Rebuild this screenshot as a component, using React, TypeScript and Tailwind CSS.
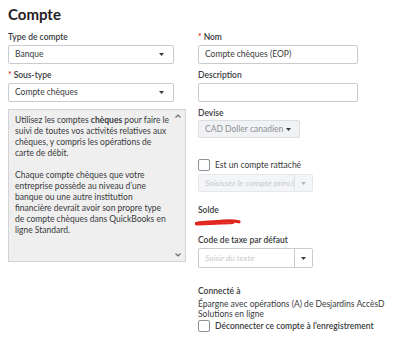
import type { ReactNode } from 'react'

function Label({ children, required, className = '' }: { children: ReactNode; required?: boolean; className?: string }) {
  return (
    <div className={`text-[8.5px] leading-[14px] font-semibold text-[#393a3d] ${className}`}>
      {required ? <span className="mr-[2px] text-[#d52b1e]">*</span> : null}
      {children}
    </div>
  )
}

function Caret({ color = '#393a3d' }: { color?: string }) {
  return (
    <svg width="5" height="3" viewBox="0 0 5 3" className="shrink-0">
      <path d="M0 0h5L2.5 3z" fill={color} />
    </svg>
  )
}

function Select({ value, className = '' }: { value: string; className?: string }) {
  return (
    <div
      className={`flex h-[19px] items-center justify-between rounded-[2px] border border-[#c9cbcf] bg-white pl-[6px] pr-[9px] text-[8.5px] text-[#393a3d] ${className}`}
    >
      <span>{value}</span>
      <Caret />
    </div>
  )
}

function Combo({ placeholder, disabled, className = '' }: { placeholder: string; disabled?: boolean; className?: string }) {
  return (
    <div
      className={`flex w-[115px] rounded-[2px] border ${disabled ? 'border-[#e6e7ea] bg-[#f4f5f8]' : 'border-[#c9cbcf] bg-white'} ${className}`}
    >
      <div className="flex min-w-0 flex-1 items-center overflow-hidden whitespace-nowrap pl-[6px] text-[8.5px] italic text-[#c7c9cd]">
        {placeholder}
      </div>
      <div className={`flex w-[18px] items-center justify-center border-l ${disabled ? 'border-[#e1e2e5]' : 'border-[#c9cbcf]'}`}>
        <Caret color={disabled ? '#b4b6ba' : '#393a3d'} />
      </div>
    </div>
  )
}

function Checkbox() {
  return <div className="h-[12px] w-[12px] shrink-0 rounded-[2px] border border-[#8d9096] bg-white" />
}

function Chevron({ up }: { up?: boolean }) {
  return (
    <svg width="6" height="4" viewBox="0 0 6 4">
      <path d={up ? 'M0.5 3.5L3 1l2.5 2.5' : 'M0.5 0.5L3 3l2.5-2.5'} fill="none" stroke="#6b6c72" strokeWidth="1.2" />
    </svg>
  )
}

export default function App() {
  return (
    <div className="h-[342px] w-[400px] overflow-hidden bg-white font-['Lato',sans-serif] text-[#393a3d]">
      <h1 className="pl-2 pt-[4px] text-[15px] font-bold leading-[20px] text-[#1f2024]">Compte</h1>

      <div className="flex gap-[12px] pl-2">
        <div className="w-[178px]">
          <Label className="mt-[6px]">Type de compte</Label>
          <Select value="Banque" className="mt-[1px] w-[166px]" />
          <Label required className="mt-[4px]">
            Sous-type
          </Label>
          <Select value="Compte chèques" className="mt-[1px] w-[166px]" />

          <div className="relative mt-[7px] h-[153px] border border-[#d2d3d6] bg-[#efefef] pl-[6px] pt-[5px] text-[8.5px] leading-[11px] text-[#393a3d]">
            <p className="whitespace-nowrap">
              Utilisez les comptes <b>chèques</b> pour faire le
              <br />
              suivi de toutes vos activités relatives aux
              <br />
              chèques, y compris les opérations de
              <br />
              carte de débit.
            </p>
            <p className="mt-[11px] whitespace-nowrap">
              Chaque compte chèques que votre
              <br />
              entreprise possède au niveau d’une
              <br />
              banque ou une autre institution
              <br />
              financière devrait avoir son propre type
              <br />
              de compte chèques dans QuickBooks en
              <br />
              ligne Standard.
            </p>
            <div className="absolute right-[4px] top-[4px]">
              <Chevron up />
            </div>
            <div className="absolute bottom-[4px] right-[4px]">
              <Chevron />
            </div>
          </div>
        </div>

        <div className="w-[192px]">
          <Label required className="mt-[6px]">
            Nom
          </Label>
          <div className="mt-[1px] flex h-[19px] w-[160px] items-center rounded-[2px] border border-[#c9cbcf] pl-[6px] text-[8.5px]">
            Compte chèques (EOP)
          </div>
          <Label className="mt-[4px]">Description</Label>
          <div className="mt-[1px] h-[19px] w-[160px] rounded-[2px] border border-[#c9cbcf]" />

          <Label className="mt-[4px]">Devise</Label>
          <div className="flex h-[18px] w-[102px] items-center justify-between rounded-[2px] border border-[#dcdde0] bg-[#f1f2f4] pl-[6px] pr-[8px] text-[8.5px] text-[#8d9096]">
            <span className="whitespace-nowrap">CAD Doller canadien</span>
            <Caret />
          </div>

          <div className="mt-[21px] flex items-center gap-[5px] text-[8.5px] leading-[12px]">
            <Checkbox />
            <span>Est un compte rattaché</span>
          </div>
          <Combo placeholder="Saisissez le compte principal" disabled className="mt-[3px] h-[18px]" />

          <Label className="mt-[11px]">Solde</Label>
          <svg width="46" height="10" viewBox="0 0 46 10" className="-ml-[3px]">
            <path d="M3 4.5h10" stroke="#b9bbbe" strokeWidth="1" />
            <path d="M1 6.5C8 4.5 20 5 28 4.2S40 4 44 4.8" fill="none" stroke="#e0271f" strokeWidth="3.2" strokeLinecap="round" />
            <path d="M2 7.5C12 6.5 26 6.8 38 6" fill="none" stroke="#e0271f" strokeWidth="2" strokeLinecap="round" />
          </svg>

          <Label className="mt-[6px]">Code de taxe par défaut</Label>
          <Combo placeholder="Saisir du texte" className="mt-[1px] h-[20px]" />

          <Label className="mt-[16px] font-medium">Connecté à</Label>
          <div className="mt-[1px] whitespace-nowrap text-[8.5px] leading-[10px]">
            Épargne avec opérations (A) de Desjardins AccèsD
            <br />
            Solutions en ligne
          </div>
          <div className="mt-[1px] flex items-center gap-[5px] text-[8.5px] font-semibold leading-[12px]">
            <Checkbox />
            <span>Déconnecter ce compte à l’enregistrement</span>
          </div>
        </div>
      </div>
    </div>
  )
}
